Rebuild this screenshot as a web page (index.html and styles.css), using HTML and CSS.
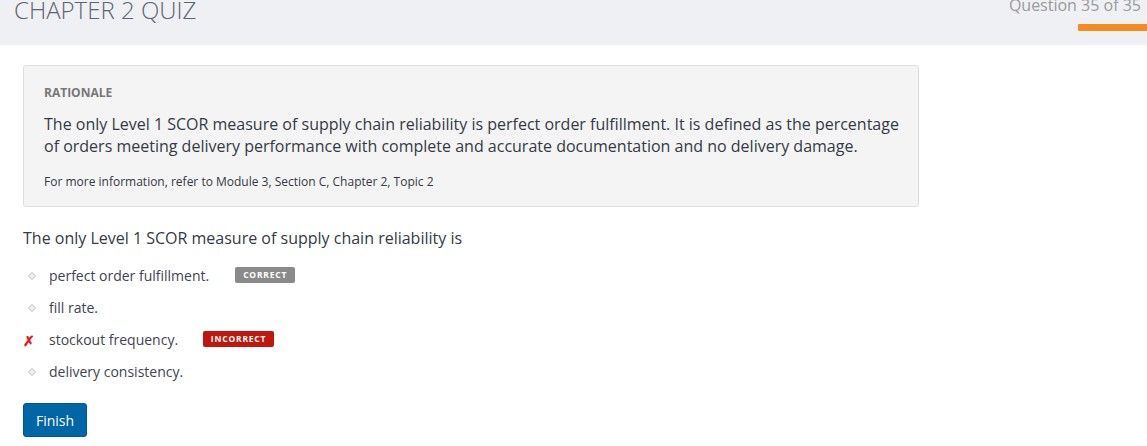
FILE: index.html
```html
<!DOCTYPE html>
<html>
<head>
<meta charset="utf-8">
<link rel="stylesheet" href="styles.css">
</head>
<body>
<header class="topbar">
  <h1 class="title">CHAPTER 2 QUIZ</h1>
  <div class="progress">
    <div class="progress-label">Question 35 of 35</div>
    <div class="progress-bar"></div>
  </div>
</header>
<main class="content">
  <section class="rationale">
    <h2 class="rationale-head">RATIONALE</h2>
    <p class="rationale-text">The only Level 1 SCOR measure of supply chain reliability is perfect order fulfillment. It is defined as the percentage of orders meeting delivery performance with complete and accurate documentation and no delivery damage.</p>
    <p class="rationale-ref">For more information, refer to Module 3, Section C, Chapter 2, Topic 2</p>
  </section>
  <p class="question">The only Level 1 SCOR measure of supply chain reliability is</p>
  <ul class="options">
    <li class="option"><span class="mark dot"></span><span class="opt-text">perfect order fulfillment.</span><span class="badge badge-correct">CORRECT</span></li>
    <li class="option"><span class="mark dot"></span><span class="opt-text">fill rate.</span></li>
    <li class="option"><span class="mark cross">✗</span><span class="opt-text">stockout frequency.</span><span class="badge badge-incorrect">INCORRECT</span></li>
    <li class="option"><span class="mark dot"></span><span class="opt-text">delivery consistency.</span></li>
  </ul>
  <button class="finish">Finish</button>
</main>
</body>
</html>
```
FILE: styles.css
```css
* { box-sizing: border-box; }
html, body { margin: 0; padding: 0; }
body {
  font-family: "Open Sans", "Noto Sans", sans-serif;
  background: #fff;
  color: #333;
  width: 1147px;
  height: 446px;
  overflow: hidden;
}
.topbar {
  height: 45px;
  background: #eff0f4;
  display: flex;
  justify-content: space-between;
  align-items: flex-start;
}
.title {
  margin: -6px 0 0 14px;
  font-size: 24px;
  font-weight: 300;
  color: #5d6470;
  line-height: 32px;
  letter-spacing: 0;
}
.progress {
  display: flex;
  flex-direction: column;
  align-items: flex-end;
  margin-right: 6px;
}
.progress-label {
  font-size: 16px;
  color: #9a9a9a;
  line-height: 20px;
  margin-top: -5px;
}
.progress-bar {
  width: 69px;
  height: 7px;
  background: #f58c1f;
  margin-top: 9px;
  margin-right: -6px;
  border-radius: 1px 0 0 1px;
}
.content {
  padding: 20px 23px 0 23px;
}
.rationale {
  width: 896px;
  height: 142px;
  background: #f4f4f4;
  border: 1px solid #dedede;
  border-radius: 3px;
  padding: 19px 14px 0 20px;
}
.rationale-head {
  margin: 0;
  font-size: 12px;
  font-weight: 700;
  color: #777;
  line-height: 16px;
}
.rationale-text {
  margin: 12px 0 0 0;
  font-size: 16px;
  line-height: 22px;
  color: #353a45;
}
.rationale-ref {
  margin: 17px 0 0 0;
  font-size: 12px;
  line-height: 16px;
  color: #353a45;
}
.question {
  margin: 20px 0 0 0;
  font-size: 16px;
  line-height: 22px;
  color: #353a45;
}
.options {
  list-style: none;
  margin: 11px 0 0 0;
  padding: 0;
}
.option {
  display: flex;
  align-items: center;
  height: 32px;
  font-size: 14px;
  color: #3f4450;
}
.mark {
  width: 26px;
  display: flex;
  align-items: center;
}
.dot::before {
  content: "";
  width: 4px;
  height: 4px;
  margin-left: 6px;
  border: 1px solid #d2d2d2;
  background: #efefef;
  transform: rotate(45deg);
}
.cross {
  color: #e3161c;
  font-size: 14px;
  font-weight: 700;
  padding-left: 0;
}
.opt-text {
  line-height: 20px;
}
.badge {
  display: inline-block;
  font-size: 8.5px;
  font-weight: 700;
  color: #fff;
  letter-spacing: 0.8px;
  line-height: 16px;
  height: 16px;
  border-radius: 2px;
  text-align: center;
  margin-top: -2px;
}
.badge-correct {
  background: #8a8a8a;
  width: 60px;
  margin-left: 26px;
}
.badge-incorrect {
  background: #c1160b;
  width: 71px;
  margin-left: 25px;
}
.finish {
  margin-top: 15px;
  width: 64px;
  height: 34px;
  background: #0066a6;
  color: #fff;
  border: 1px solid #00588f;
  border-radius: 3px;
  font-family: "Open Sans", "Noto Sans", sans-serif;
  font-size: 14px;
  padding: 0;
}
```
